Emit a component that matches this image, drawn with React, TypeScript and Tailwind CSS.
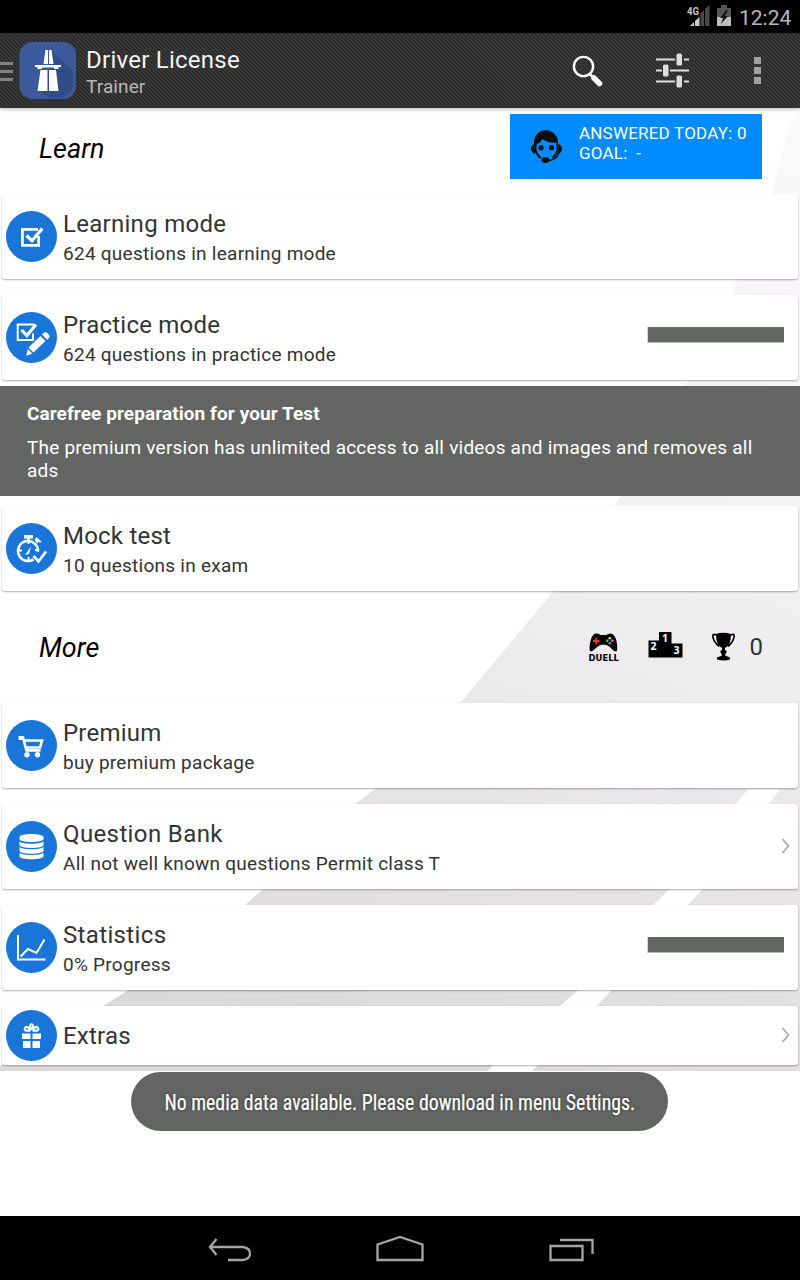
import type { ReactNode } from "react";

function Circle({ children }: { children: ReactNode }) {
  return (
    <svg className="block h-[51px] w-[51px] shrink-0" viewBox="0 0 51 51" fill="none">
      <circle cx="25.5" cy="25.5" r="25.5" fill="#1976d8" />
      {children}
    </svg>
  );
}

const LearnIcon = () => (
  <Circle>
    <path d="M32.600 25v9.300H16.400V18.400H32" stroke="#fff" strokeWidth="2.800" />
    <path d="m20.500 24.500 5.500 5.200L36.300 17.500" stroke="#fff" strokeWidth="3.300" />
  </Circle>
);

const PracticeIcon = () => (
  <Circle>
    <path d="M27 21.500v6.500H11.700V12.500H28" stroke="#fff" strokeWidth="2" />
    <path d="m15.500 18 5.300 5.500L30 12.500" stroke="#fff" strokeWidth="3.200" />
    <path d="m22.500 35.500 12-11.500 5 5-12 11.500zM36 22.500l2.200-2q1.500-1 3 .5l2 2q1 1.500 0 2.800l-2.200 2zM21.700 37l4.500 4.500-6 2.500z" fill="#fff" />
  </Circle>
);

const TimerIcon = () => (
  <Circle>
    <path d="M27.500 36.400A10 10 0 1 1 32 29" stroke="#fff" strokeWidth="2.500" />
    <path d="M18 12h9v3.500h-3v3h-3v-3h-3zM28.500 16.500l2.300-2.500 4.500 4.500-1.300 1.300-1.500-1-1.500 1.700z" fill="#fff" />
    <path d="M22.500 18v3M13 27.500h3M22.500 34v3M29 27h3" stroke="#fff" strokeWidth="2" />
    <path d="m25 23.500-2 7.500-4 1z" fill="#fff" />
    <path d="m27.500 33 5 5.500 7.500-10" stroke="#fff" strokeWidth="2.700" />
  </Circle>
);

const CartIcon = () => (
  <Circle>
    <path d="M13 17.500h4l3.500 12.800h14" stroke="#fff" strokeWidth="2.700" />
    <path d="M17 20.500h19l-2 7H19" stroke="#fff" strokeWidth="2.700" />
    <path d="M12.500 16h4v4h-4z" fill="#fff" />
    <circle cx="21" cy="34.800" r="2.700" fill="#fff" />
    <circle cx="31.500" cy="34.800" r="2.700" fill="#fff" />
  </Circle>
);

const DatabaseIcon = () => (
  <Circle>
    <path d="M13.500 16c0-4 24-4 24 0v2c0 4-24 4-24 0zM13.500 20.500c3 3 21 3 24 0V24c0 4-24 4-24 0zM13.500 26c3 3 21 3 24 0v3.800c0 4-24 4-24 0zM13.500 31.700c3 3 21 3 24 0v3.500c0 4-24 4-24 0z" fill="#fff" />
  </Circle>
);

const ChartIcon = () => (
  <Circle>
    <path d="M12 13v24.500h27.500" stroke="#fff" strokeWidth="2" />
    <path d="m14.500 34.500 7.500-7.500 8.500 4L38.500 17.500" stroke="#fff" strokeWidth="2" />
  </Circle>
);

const GiftIcon = () => (
  <Circle>
    <path d="M16 23.500h8.500V29H16zM26.500 23.500H35V29h-8.500zM17 31h7.500v7H17zM26.500 31H34v7h-7.500z" fill="#fff" />
    <path d="M24.500 20.600h-4.200q-2.800-.5-.8-3.300 2.500-1.500 5 3.300M26.500 20.600h4.200q2.800-.5.800-3.300-2.500-1.500-5 3.300M25.500 20c-5-7.500 5-7.500 0 0" stroke="#fff" strokeWidth="2.200" />
  </Circle>
);

type CardProps = { icon: ReactNode; title: string; sub?: string; tracking?: string; end?: ReactNode };

function Card({ icon, title, sub, tracking = "tracking-[0.22px]", end }: CardProps) {
  return (
    <div
      className={`mx-[2px] flex shrink-0 items-center rounded-[3px] bg-white pl-1 shadow-[0_1px_2px_rgba(0,0,0,0.32)] ${sub ? "h-[85px]" : "h-[59px]"}`}
    >
      {icon}
      <div className={`ml-[6px] flex-1 whitespace-nowrap text-[#333] ${sub ? "pt-[3px]" : ""}`}>
        <div className={`text-[24px] leading-[30px] ${tracking}`}>{title}</div>
        {sub && <div className="text-[19px] leading-[29px] tracking-[0.26px]">{sub}</div>}
      </div>
      {end}
    </div>
  );
}

const Bar = () => (
  <div className="mr-[14px] mb-[6px] h-4 w-[136px] border-b border-b-[#b8b8b8] bg-[#636562] shadow-[-1px_0_0_#d4d4d4]" />
);

const Chevron = () => (
  <svg className="mr-[7px] mb-px block h-4 w-[10px]" viewBox="0 0 10 16" fill="none">
    <path d="m1.500 1 6 7-6 7" stroke="#adadad" strokeWidth="1.800" />
  </svg>
);

function Road() {
  return (
    <svg className="absolute inset-0 h-[963px] w-[800px]" viewBox="0 108 800 963">
      <defs>
        <linearGradient id="road" x1="700" y1="108" x2="350" y2="1071" gradientUnits="userSpaceOnUse">
          <stop offset="0" stopColor="#faf8fa" />
          <stop offset=".3" stopColor="#f4f3f4" />
          <stop offset=".55" stopColor="#edebed" />
          <stop offset=".75" stopColor="#e5e2e4" />
          <stop offset="1" stopColor="#dad8d9" />
        </linearGradient>
      </defs>
      <path d="M800 108 788 130 775 180 772 195 737 280 732 295 688 381 620 498 553 592 460 703 375 789 355 804 262 890 245 905 127 991 103 1006 0 1066V1071H800Z" fill="url(#road)" />
      <path d="M748 789h32l-11 15-67 86-14 15-78 87-13 14-65 65h-45l73-65 16-14 77-87 16-15 67-86z" fill="#fff" />
    </svg>
  );
}

function AppLogo() {
  return (
    <svg className="block h-[57px] w-[57px]" viewBox="0 0 57 57">
      <rect x=".5" width="56.500" height="57" rx="13" fill="#3a5a9b" />
      <path d="m31 8 23 20v17q-3 9-14 11h-8L18 48l12-20z" fill="#314d86" />
      <path d="M26.500 8H29v14h-4.500zM30 8h2.500l2 14H30zM16 23h26v2h-2.500v2h-4l-1-1.500h-11l-1 1.500h-4v-2H16zM21.500 28h7v21h-10zM30 28h7l2.500 21H30z" fill="#fff" />
    </svg>
  );
}

function StatusBar() {
  return (
    <div className="flex h-[33px] shrink-0 items-center justify-end bg-black pr-2 text-[#b8b8b8]">
      <svg className="block h-[33px] w-[50px]" viewBox="0 0 50 33">
        <path d="M13.500 13.500 17 10v16h-3.500zM18 9l4.500-4v21H18z" fill="#484848" />
        <path d="M3 26 7 22v4zM8 21l4.500-4V26H8z" fill="#ccc" />
        <path d="M11.500 15 12.500 14v3l-1 1z" fill="#484848" />
        <text x="0" y="14.500" fontFamily="Roboto" fontSize="11" fontWeight="700" fill="#c4c4c4" textLength="12" lengthAdjust="spacingAndGlyphs">4G</text>
        <path d="M30 8h4V5h6v3h4v18H30z" fill="#555" />
        <path d="M30 17h14v9H30z" fill="#bdbdbd" />
        <path d="m39 10-6 8h3l-2 6 7-8h-3l3-6z" fill="#171717" />
      </svg>
      <span className="ml-0.5 w-[53px] pt-0.5 text-[21px] leading-[30px] whitespace-nowrap">12:24</span>
    </div>
  );
}

function Header() {
  return (
    <header className="relative z-10 flex h-[75px] shrink-0 items-center bg-[#343534] bg-[repeating-linear-gradient(45deg,#2b2c2b_0px,#2b2c2b_1.414px,#434443_2.121px,#434443_2.828px)] shadow-[0_1px_4px_rgba(0,0,0,0.3)]">
      <div className="mr-[6px] flex w-[13px] flex-col gap-[5px] pt-0.5">
        <div className="h-[3px] bg-[#858286]" />
        <div className="h-[3px] bg-[#858286]" />
        <div className="h-[3px] bg-[#858286]" />
      </div>
      <AppLogo />
      <div className="ml-[10px] flex-1 pt-[3px] whitespace-nowrap">
        <div className="text-[24px] leading-[28px] tracking-[0.25px] text-[#f3f3f3]">Driver License</div>
        <div className="text-[19px] leading-[25px] tracking-[0.1px] text-[#b8b8b8]">Trainer</div>
      </div>
      <svg className="mr-[53px] block h-[34px] w-[32px]" viewBox="0 0 32 34" fill="none">
        <circle cx="12.500" cy="12.500" r="9.600" stroke="#fff" strokeWidth="2.400" />
        <path d="m18.500 20 4 3.500" stroke="#fff" strokeWidth="2.500" />
        <path d="m23 24 5.500 5.500" stroke="#fff" strokeWidth="5.500" strokeLinecap="round" />
      </svg>
      <svg className="mr-16 block h-[36px] w-[34px]" viewBox="0 0 34 36">
        <path d="M0 6.500h19M28 6.500h5M0 17.500h6M14 17.500h19M0 28.500h19M28 28.500h5" stroke="#ddd" strokeWidth="2" />
        <g fill="#ddd">
          <rect x="20.500" y=".5" width="5.500" height="12" rx="1.500" />
          <rect x="7" y="11.500" width="5.500" height="12" rx="1.500" />
          <rect x="20.500" y="22.500" width="5.500" height="12" rx="1.500" />
        </g>
      </svg>
      <div className="mr-[39px] flex w-[7px] flex-col gap-[3px]">
        <div className="h-[7px] bg-[#a1a1a1]" />
        <div className="h-[7px] bg-[#a1a1a1]" />
        <div className="h-[7px] bg-[#a1a1a1]" />
      </div>
    </header>
  );
}

function Agent() {
  return (
    <svg className="ml-[21px] block h-[34px] w-[31px]" viewBox="0 0 31 34">
      <path d="M3 16v-5Q4 1 15 0q10 1 12 11v5z" fill="#07100c" />
      <path d="M5.500 14q4.500-1 5.500-5 7 4.500 14.500 3.500V19q-3 9-10.500 11Q7 28 5 19z" fill="#008cff" />
      <path d="M4.500 14v6q2 6 5.500 8M26.500 14v6q-2 6-5.500 8" fill="none" stroke="#07100c" strokeWidth="2" />
      <circle cx="10" cy="17.700" r="2.600" fill="#07100c" />
      <circle cx="20.500" cy="17.700" r="2.600" fill="#07100c" />
      <path d="M3 14q-4 3-3 6t4.500 4zM28 14q4 3 3 6t-4.500 4z" fill="#07100c" />
      <path d="M28 22q-2 8.500-12 8.500" fill="none" stroke="#07100c" strokeWidth="1.500" />
      <ellipse cx="14.500" cy="30" rx="4" ry="3" fill="#07100c" />
    </svg>
  );
}

function Scores() {
  return (
    <div className="flex items-center">
      <svg className="mr-[29px] block h-[30px] w-[31px]" viewBox="0 0 31 30">
        <path d="M2.500 19.500Q.5 17 2.500 9 4.500 1 8.500 1.500q3 0 4 1.500h6q1-1.500 4-1.500 4 0 6 7.500 1.500 8 0 10.500-3 0-6-4-3-3-7-3t-7 3q-4 4-6 4z" fill="#000" />
        <path d="M5 9h6.500M8.250 5.800v6.400" stroke="#ed3030" strokeWidth="2" />
        <circle cx="21.800" cy="6.300" r="1.300" fill="#f3e83d" />
        <circle cx="19.300" cy="8.700" r="1.300" fill="#43ce65" />
        <circle cx="24.300" cy="8.700" r="1.300" fill="#df65df" />
        <circle cx="21.800" cy="11.200" r="1.300" fill="#5a9dff" />
        <text x=".5" y="28.500" fontFamily="DejaVu Sans" fontSize="8" fontWeight="700" textLength="30.500" lengthAdjust="spacingAndGlyphs">DUELL</text>
      </svg>
      <svg className="mr-[29px] block h-[30px] w-[35px]" viewBox="0 0 35 30">
        <path d="M.500 8.500H11V-.3h12.500V11.500h11v14H.5z" fill="#000" />
        <g fill="#fff" fontFamily="Noto Sans" fontSize="10.500" fontWeight="700">
          <text x="14" y="9.500">1</text>
          <text x="2.500" y="18">2</text>
          <text x="25.500" y="21.500">3</text>
        </g>
      </svg>
      <svg className="mr-[15px] block h-[30px] w-[23px]" viewBox="0 0 23 30">
        <path d="M4 2q7.500-2.500 15 0 0 12-6 14v2q3 1 1 3l-1 2.500 5 2v2q-6 2-13 0v-2l5-2L9 21q-2-2 1-3v-2Q4 14 4 2z" fill="#000" />
        <path d="M4 3Q0 1 1 5.500t6 9M19 3q4-2 3 2.500t-6 9" fill="none" stroke="#000" strokeWidth="1.600" />
      </svg>
      <span className="mr-[37px] text-[24px] leading-[30px] text-[#333]">0</span>
    </div>
  );
}

export default function App() {
  return (
    <div className="flex h-[1280px] w-[800px] flex-col overflow-hidden bg-white font-['Roboto',sans-serif]">
      <StatusBar />
      <Header />
      <main className="relative h-[963px] shrink-0">
        <Road />
        <div className="relative flex h-full flex-col">
          <div className="flex h-[86px] shrink-0 justify-between pr-[38px] pl-[39px]">
            <h2 className="pt-[23px] text-[27px] leading-9 text-black italic">Learn</h2>
            <div className="mt-[6px] flex h-[65px] w-[252px] items-center bg-[#008cff]">
              <Agent />
              <div className="mb-[7px] ml-[17px] text-[17px] leading-[20px] tracking-[0.2px] whitespace-pre text-white">
                {"ANSWERED TODAY: 0\nGOAL:  -"}
              </div>
            </div>
          </div>
          <div className="flex flex-col gap-4">
            <Card icon={<LearnIcon />} title="Learning mode" sub="624 questions in learning mode" tracking="tracking-[0.28px]" />
            <Card icon={<PracticeIcon />} title="Practice mode" sub="624 questions in practice mode" end={<Bar />} />
          </div>
          <section className="mt-[6px] h-[110px] shrink-0 bg-[#636562] pt-4 pl-[27px] text-[19px] text-white">
            <h3 className="leading-[24px] font-bold tracking-[0.08px]">Carefree preparation for your Test</h3>
            <p className="mt-[10px] leading-[23px] tracking-[0.215px] whitespace-nowrap">
              The premium version has unlimited access to all videos and images and removes all
              <br />
              ads
            </p>
          </section>
          <div className="mt-[10px]">
            <Card icon={<TimerIcon />} title="Mock test" sub="10 questions in exam" />
          </div>
          <div className="flex h-[112px] shrink-0 items-center justify-between pl-[39px]">
            <h2 className="pt-0.5 text-[27px] leading-9 text-black italic">More</h2>
            <Scores />
          </div>
          <div className="flex flex-col gap-4">
            <Card icon={<CartIcon />} title="Premium" sub="buy premium package" />
            <Card icon={<DatabaseIcon />} title="Question Bank" sub="All not well known questions Permit class T" tracking="tracking-[0.38px]" end={<Chevron />} />
            <Card icon={<ChartIcon />} title="Statistics" sub="0% Progress" tracking="tracking-[0.35px]" end={<Bar />} />
            <Card icon={<GiftIcon />} title="Extras" end={<Chevron />} />
          </div>
        </div>
      </main>
      <div className="flex h-[145px] shrink-0 justify-center pt-px">
        <div className="mr-px flex h-[59px] w-[537px] items-center justify-center rounded-[30px] bg-[#636562] pt-0.5">
          <span className="scale-x-[0.899] font-['Roboto_Condensed','Roboto',sans-serif] text-[22px] whitespace-nowrap text-white [-webkit-text-stroke:0.25px_white] [text-shadow:0_0_3px_rgba(0,0,0,0.7)]">
            No media data available. Please download in menu Settings.
          </span>
        </div>
      </div>
      <nav className="flex h-16 shrink-0 items-center bg-black">
        <svg className="block h-16 w-[800px]" viewBox="0 1216 800 64" fill="none" stroke="#a5a5a5" strokeWidth="2.300">
          <path d="m216.500 1239-6.500 8 6.500 8M210 1247h33q7 1 7 6.500t-7 6.500h-15" />
          <path d="M377.500 1260v-15.500l22.500-7.500 22.500 7.500V1260z" />
          <path d="M550.500 1246h32v14h-32zM560 1240h32.500v14" />
        </svg>
      </nav>
    </div>
  );
}
